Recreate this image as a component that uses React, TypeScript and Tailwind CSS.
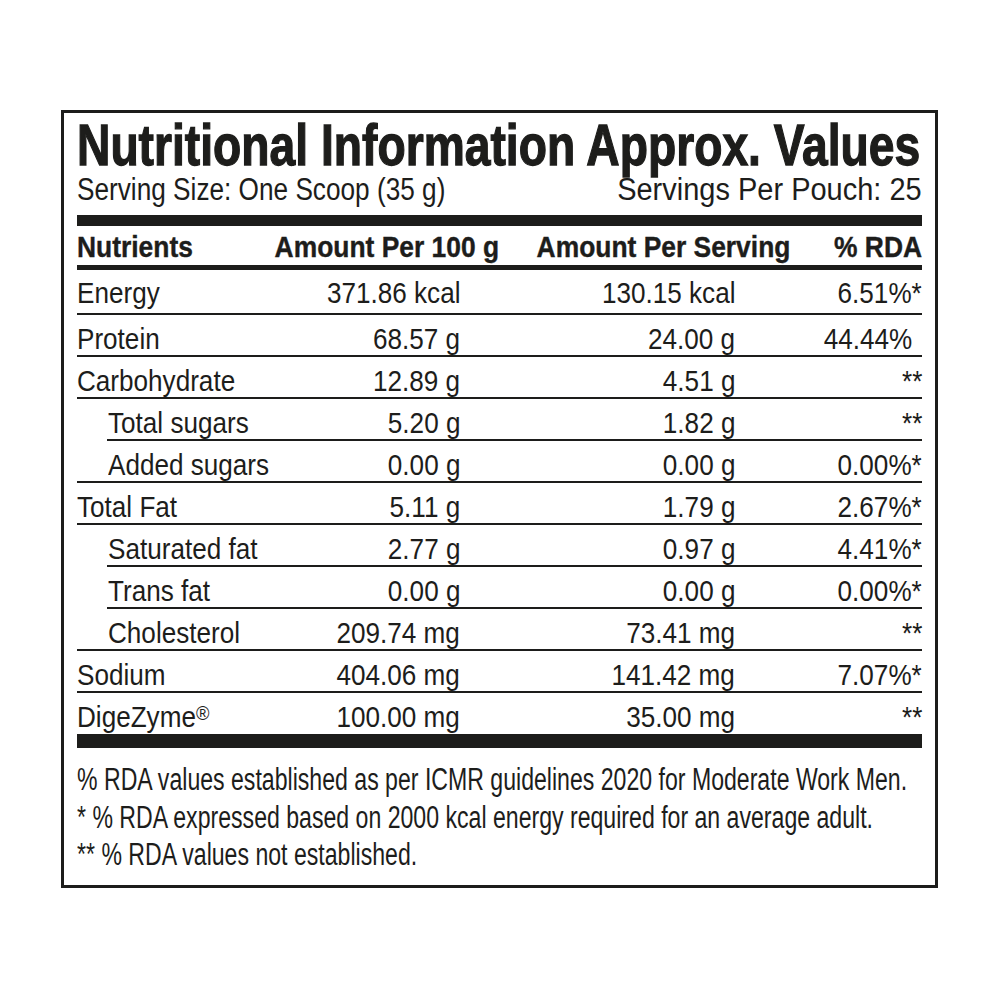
import clsx from 'clsx'
import type { ReactNode } from 'react'

// ── Label data ─────────────────────────────────────────

type Row = {
  name: string
  per100: string
  perServing: string
  rda: string
  star?: boolean // value is followed by "*"
  sub?: boolean // indented sub-nutrient
}

const ROWS: Row[] = [
  { name: 'Energy', per100: '371.86 kcal', perServing: '130.15 kcal', rda: '6.51%', star: true },
  { name: 'Protein', per100: '68.57 g', perServing: '24.00 g', rda: '44.44%' },
  { name: 'Carbohydrate', per100: '12.89 g', perServing: '4.51 g', rda: '**' },
  { name: 'Total sugars', per100: '5.20 g', perServing: '1.82 g', rda: '**', sub: true },
  { name: 'Added sugars', per100: '0.00 g', perServing: '0.00 g', rda: '0.00%', star: true, sub: true },
  { name: 'Total Fat', per100: '5.11 g', perServing: '1.79 g', rda: '2.67%', star: true },
  { name: 'Saturated fat', per100: '2.77 g', perServing: '0.97 g', rda: '4.41%', star: true, sub: true },
  { name: 'Trans fat', per100: '0.00 g', perServing: '0.00 g', rda: '0.00%', star: true, sub: true },
  { name: 'Cholesterol', per100: '209.74 mg', perServing: '73.41 mg', rda: '**', sub: true },
  { name: 'Sodium', per100: '404.06 mg', perServing: '141.42 mg', rda: '7.07%', star: true },
  { name: 'DigeZyme', per100: '100.00 mg', perServing: '35.00 mg', rda: '**' },
]

const FOOTNOTES = [
  '% RDA values established as per ICMR guidelines 2020 for Moderate Work Men.',
  '* % RDA expressed based on 2000 kcal energy required for an average adult.',
  '** % RDA values not established.',
]

// No condensed face is installed, so the label's narrow type is squeezed
// horizontally. Left cells shrink toward the left, right cells toward the right.
function L({ children }: { children: ReactNode }) {
  return <span className="inline-block origin-left scale-x-[0.87] whitespace-nowrap">{children}</span>
}

function R({ children }: { children: ReactNode }) {
  return <span className="inline-block origin-right scale-x-[0.87] whitespace-nowrap">{children}</span>
}

// ── Pieces ─────────────────────────────────────────────

function RdaCell({ row }: { row: Row }) {
  if (row.rda === '**') return <R>**</R>
  return (
    <R>
      {row.rda}
      {/* keeps the % signs lined up when there is no asterisk */}
      <span className={clsx(!row.star && 'invisible')}>*</span>
    </R>
  )
}

function NutrientRow({ row, first, last }: { row: Row; first: boolean; last: boolean }) {
  return (
    <div
      className={clsx(
        'grid grid-cols-[230px_153px_275px_187px] text-[30px] leading-[29px]',
        first ? 'h-[43px] pt-[8px]' : last ? 'h-[41px] pt-[9px]' : 'h-[40px] pt-[9px]'
      )}
    >
      <div className={clsx(row.sub && 'pl-[31px]')}>
        <L>
          {row.name}
          {row.name === 'DigeZyme' && <span className="relative -top-[7px] text-[21px]">®</span>}
        </L>
      </div>
      <div className="text-right">
        <R>{row.per100}</R>
      </div>
      <div className="text-right">
        <R>{row.perServing}</R>
      </div>
      <div className="text-right">
        <RdaCell row={row} />
      </div>
    </div>
  )
}

// ── Main ───────────────────────────────────────────────

export default function App() {
  return (
    <div className="h-[1000px] w-[1000px] overflow-hidden bg-white pl-[61px] pt-[110px] font-['Liberation_Sans',Arial,sans-serif] text-[#1d1d1b]">
      <div className="h-[778px] w-[877px] overflow-hidden border-[3px] border-[#1d1d1b] px-[13px] pt-[3px]">
        {/* Title */}
        <h1 className="h-[58px] text-[58px] font-bold leading-[58px] [-webkit-text-stroke:1.3px_#1d1d1b]">
          <span className="inline-block origin-left scale-x-[0.797] whitespace-nowrap">
            Nutritional Information Approx. Values
          </span>
        </h1>
        <div className="flex h-[32px] justify-between text-[31px] leading-[32px]">
          <span className="inline-block origin-left scale-x-[0.845] whitespace-nowrap">
            Serving Size: One Scoop (35 g)
          </span>
          <span className="inline-block origin-right scale-x-[0.935] whitespace-nowrap">
            Servings Per Pouch: 25
          </span>
        </div>

        <div className="mt-[9px] h-[11px] bg-[#1d1d1b]" />

        {/* Column headings */}
        <div className="grid h-[39px] grid-cols-[150px_272px_291px_132px] pt-[6px] text-[30px] font-bold leading-[30px] [-webkit-text-stroke:0.4px_#1d1d1b]">
          <div>
            <span className="inline-block origin-left scale-x-[0.88] whitespace-nowrap">Nutrients</span>
          </div>
          <div className="text-right">
            <span className="inline-block origin-right scale-x-[0.88] whitespace-nowrap">Amount Per 100 g</span>
          </div>
          <div className="text-right">
            <span className="inline-block origin-right scale-x-[0.88] whitespace-nowrap">Amount Per Serving</span>
          </div>
          <div className="text-right">
            <span className="inline-block origin-right scale-x-[0.88] whitespace-nowrap">% RDA</span>
          </div>
        </div>
        <div className="h-[5px] bg-[#1d1d1b]" />

        {/* Nutrient rows */}
        {ROWS.map((row, i) => (
          <div key={row.name}>
            {i > 0 && (
              <div
                className={clsx(
                  'h-[2px] bg-[#1d1d1b]',
                  row.sub && ROWS[i - 1].sub && 'ml-[30px]'
                )}
              />
            )}
            <NutrientRow row={row} first={i === 0} last={i === ROWS.length - 1} />
          </div>
        ))}

        <div className="h-[14px] bg-[#1d1d1b]" />

        {/* Footnotes */}
        <div className="pt-[13px] text-[31px] leading-[37.5px]">
          {FOOTNOTES.map((line) => (
            <div key={line}>
              <span className="inline-block origin-left scale-x-[0.745] whitespace-nowrap">{line}</span>
            </div>
          ))}
        </div>
      </div>
    </div>
  )
}
